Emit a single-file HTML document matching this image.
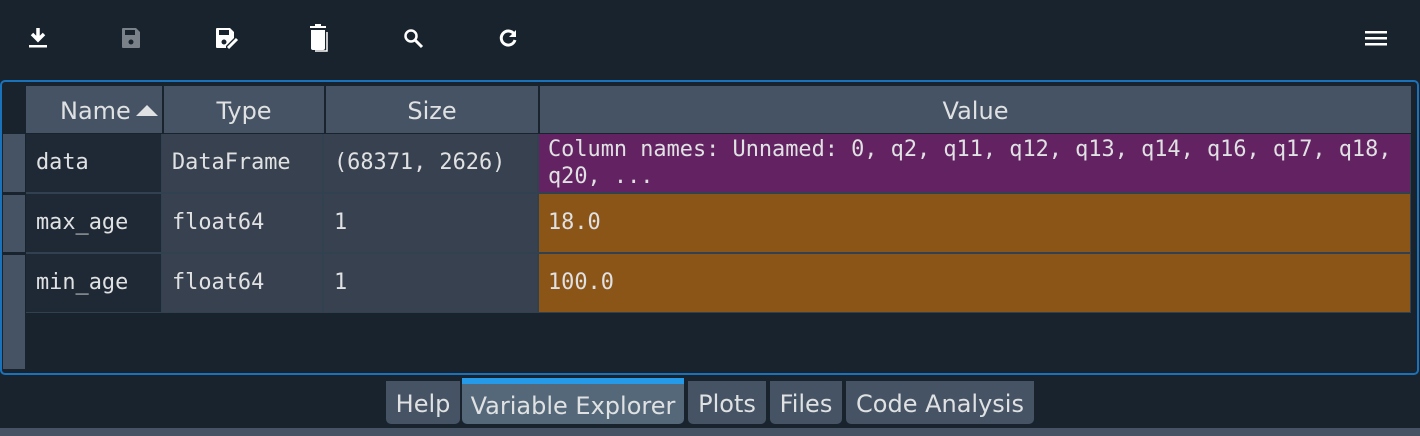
<!DOCTYPE html>
<html><head><meta charset="utf-8"><style>
*{margin:0;padding:0;box-sizing:border-box}
body{width:1420px;height:436px;background:#19232d;position:relative;overflow:hidden;font-family:"DejaVu Sans","Liberation Sans",sans-serif;color:#e0e1e3}
.a{position:absolute}
.panel{left:0;top:80px;width:1419px;height:295px;border:2px solid #1a72bb;border-radius:5px}
.hd{background:#455364;top:86px;height:47px;font-size:24px;text-align:center;line-height:50px;color:#dfe1e2}
.c{font-family:"DejaVu Sans Mono","Liberation Mono",monospace;font-size:21.9px;padding-left:10px;color:#e0e1e3;white-space:nowrap}
.tab{top:381px;height:43px;background:#455364;border-radius:0 0 5px 5px;font-size:24px;line-height:47px;text-align:center;color:#dfe1e2;white-space:nowrap}
svg{position:absolute}
</style></head><body>
<svg style="left:26px;top:26px" width="24" height="24" viewBox="0 0 24 24"><path d="M12 2v10M6 8l6 6 6-6" stroke="#fff" stroke-width="3.5" fill="none"/><rect x="3" y="19" width="18" height="2.5" fill="#fff"/></svg>
<svg style="left:119px;top:26px" width="24" height="24" viewBox="0 0 24 24"><path d="M4 2h13l4 4v15a1 1 0 0 1-1 1H4a1 1 0 0 1-1-1V3a1 1 0 0 1 1-1z" fill="#7b8189"/><rect x="6" y="4" width="10" height="5" fill="#19232d"/><circle cx="12" cy="16" r="2.5" fill="#19232d"/></svg>
<svg style="left:213px;top:26px" width="26" height="24" viewBox="0 0 26 24"><path d="M4 2h13l4 4v6l-8 8v2H4a1 1 0 0 1-1-1V3a1 1 0 0 1 1-1z" fill="#fff"/><rect x="6" y="4" width="10" height="5" fill="#19232d"/><circle cx="11" cy="16" r="2.5" fill="#19232d"/><path d="M15 22l9-9" stroke="#fff" stroke-width="3"/></svg>
<svg style="left:307px;top:23px" width="26" height="30" viewBox="0 0 26 30"><rect x="3" y="3" width="16" height="2" fill="#fff"/><rect x="8" y="1" width="6" height="3" fill="#fff"/><path d="M4 7h14v18a2 2 0 0 1-2 2H6a2 2 0 0 1-2-2z" fill="#fff"/><path d="M20 9v19H8" stroke="#fff" stroke-width="1.5" fill="none"/></svg>
<svg style="left:402px;top:27px" width="24" height="24" viewBox="0 0 24 24"><circle cx="9" cy="9" r="5.5" stroke="#fff" stroke-width="2.5" fill="none"/><path d="M13 13l7 7" stroke="#fff" stroke-width="3"/></svg>
<svg style="left:496px;top:26px" width="24" height="24" viewBox="0 0 24 24"><path d="M18 8A7 7 0 1 0 19 14" stroke="#fff" stroke-width="3" fill="none"/><path d="M20 4v7h-7z" fill="#fff"/></svg>
<svg style="left:1364px;top:30px" width="24" height="18" viewBox="0 0 24 18"><rect x="1" y="1" width="22" height="2.5" fill="#fff"/><rect x="1" y="7" width="22" height="2.5" fill="#fff"/><rect x="1" y="13" width="22" height="2.5" fill="#fff"/></svg>

<div class="a panel"></div>
<div class="a" style="left:3px;top:134px;width:22px;height:235px;background:#455364"></div>
<div class="a" style="left:3px;top:192px;width:22px;height:3px;background:#19232d"></div>
<div class="a" style="left:3px;top:252px;width:22px;height:3px;background:#19232d"></div>
<div class="a hd" style="left:26px;width:136px;text-align:left;padding-left:34px">Name</div>
<svg style="left:135px;top:103px" width="24" height="14" viewBox="0 0 24 14"><path d="M1 13L12 2l11 11z" fill="#dfe1e2"/></svg>
<div class="a hd" style="left:164px;width:160px">Type</div>
<div class="a hd" style="left:326px;width:212px">Size</div>
<div class="a hd" style="left:540px;width:871px">Value</div>

<div class="a" style="left:26px;top:134px;width:1385px;height:179px;background:#32414f"></div>

<div class="a c" style="left:26px;top:134px;width:135px;height:58px;background:#1f2935;line-height:58px">data</div>
<div class="a c" style="left:162px;top:134px;width:160px;height:58px;background:#37414f;line-height:58px">DataFrame</div>
<div class="a c" style="left:324px;top:134px;width:213px;height:58px;background:#37414f;line-height:58px">(68371, 2626)</div>
<div class="a c" style="left:539px;top:134px;width:871px;height:58px;background:#632262;line-height:27px;padding-top:2px;padding-left:9px">Column names: Unnamed: 0, q2, q11, q12, q13, q14, q16, q17, q18,<br>q20, ...</div>

<div class="a c" style="left:26px;top:194px;width:135px;height:58px;background:#1f2935;line-height:58px">max_age</div>
<div class="a c" style="left:162px;top:194px;width:160px;height:58px;background:#37414f;line-height:58px">float64</div>
<div class="a c" style="left:324px;top:194px;width:213px;height:58px;background:#37414f;line-height:58px">1</div>
<div class="a c" style="left:539px;top:194px;width:871px;height:58px;background:#8c5518;line-height:58px;padding-left:9px">18.0</div>

<div class="a c" style="left:26px;top:254px;width:135px;height:58px;background:#1f2935;line-height:58px">min_age</div>
<div class="a c" style="left:162px;top:254px;width:160px;height:58px;background:#37414f;line-height:58px">float64</div>
<div class="a c" style="left:324px;top:254px;width:213px;height:58px;background:#37414f;line-height:58px">1</div>
<div class="a c" style="left:539px;top:254px;width:871px;height:58px;background:#8c5518;line-height:58px;padding-left:9px">100.0</div>

<div class="a tab" style="left:386px;width:74px">Help</div>
<div class="a tab" style="left:462px;width:222px;top:378px;height:46px;background:#54687a;border-top:6px solid #259ae9;line-height:44px">Variable Explorer</div>
<div class="a tab" style="left:688px;width:78px">Plots</div>
<div class="a tab" style="left:770px;width:72px">Files</div>
<div class="a tab" style="left:846px;width:188px">Code Analysis</div>
<div class="a" style="left:0;top:428px;width:1420px;height:8px;background:#455364"></div>
</body></html>
